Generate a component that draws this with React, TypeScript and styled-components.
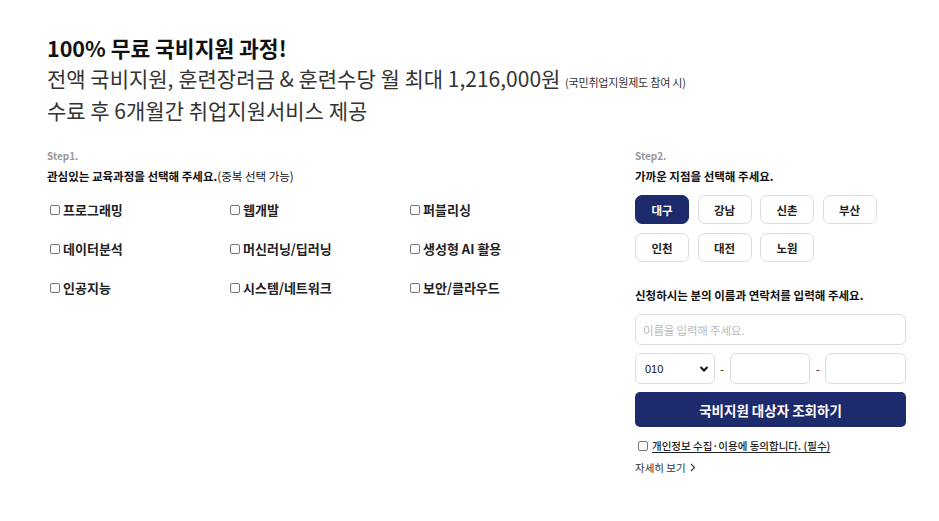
import styled, { createGlobalStyle } from "styled-components"

const GlobalStyle = createGlobalStyle`
  body {
    margin: 0;
    background: #fff;
    font-family: "Noto Sans CJK KR", "Noto Sans", sans-serif;
    color: #111;
  }
  * { box-sizing: border-box; }
`

const NAVY = "#1d2a6c"

const Page = styled.div`
  width: 939px;
  padding: 33px 33px 40px 47px;
`

const Title = styled.h1`
  margin: 0;
  font-size: 21.5px;
  font-weight: 700;
  line-height: 29px;
  letter-spacing: 0;
`

const Sub = styled.p`
  margin: 0;
  height: 32px;
  font-size: 21px;
  font-weight: 400;
  line-height: 32px;
  color: #333;
  letter-spacing: 0;
`

const Note = styled.span`
  font-size: 11px;
  line-height: 1;
  color: #333;
  letter-spacing: -0.2px;
`

const Body = styled.div`
  display: flex;
  justify-content: space-between;
  margin-top: 23px;
`

const LeftCol = styled.div`
  width: 560px;
`

const RightCol = styled.div`
  width: 271px;
`

const Step = styled.div`
  font-size: 10px;
  font-weight: 700;
  color: #999;
  line-height: 14px;
`

const Question = styled.div`
  margin-top: 5px;
  font-size: 11.5px;
  font-weight: 700;
  line-height: 16px;
  letter-spacing: 0;

  span {
    font-weight: 400;
  }
`

const CourseGrid = styled.div`
  display: grid;
  grid-template-columns: 180px 180px 180px;
  row-gap: 23px;
  margin-top: 18px;
  padding-left: 3px;
`

const CourseItem = styled.label`
  display: flex;
  align-items: center;
  gap: 3px;
  font-size: 13px;
  font-weight: 700;
  line-height: 16px;
  color: #222;
  letter-spacing: 0;
`

const Box = styled.span`
  display: inline-block;
  width: 10px;
  height: 10px;
  border: 1px solid #777;
  border-radius: 2px;
  background: #fff;
  flex-shrink: 0;
`

const BranchGrid = styled.div`
  display: grid;
  grid-template-columns: repeat(4, 54px);
  column-gap: 8.5px;
  row-gap: 9px;
  margin-top: 11px;
`

const Branch = styled.button<{ $active?: boolean }>`
  height: 29px;
  border-radius: 7px;
  border: 1px solid ${p => (p.$active ? NAVY : "#dcdcdc")};
  background: ${p => (p.$active ? NAVY : "#fff")};
  color: ${p => (p.$active ? "#fff" : "#222")};
  font-family: inherit;
  font-size: 11.5px;
  font-weight: 700;
  padding: 0;
`

const FormLabel = styled(Question)`
  margin-top: 25px;
`

const NameInput = styled.div`
  margin-top: 11px;
  height: 31px;
  border: 1px solid #dcdcdc;
  border-radius: 6px;
  display: flex;
  align-items: center;
  padding-left: 7px;
  font-size: 11.5px;
  color: #bbb;
  letter-spacing: -0.2px;
`

const PhoneRow = styled.div`
  display: flex;
  align-items: center;
  margin-top: 8px;
`

const Field = styled.div<{ $w: number }>`
  width: ${p => p.$w}px;
  height: 31px;
  border: 1px solid #dcdcdc;
  border-radius: 6px;
  display: flex;
  align-items: center;
  justify-content: space-between;
  padding: 0 5px 0 9px;
  font-size: 11px;
  color: #111;
  font-family: "Liberation Sans", Arial, sans-serif;
`

const Dash = styled.span`
  width: 15px;
  text-align: center;
  font-size: 12px;
  color: #333;
`

const Submit = styled.button`
  margin-top: 8px;
  width: 100%;
  height: 35px;
  border: none;
  border-radius: 5px;
  background: ${NAVY};
  color: #fff;
  font-family: inherit;
  font-size: 13.5px;
  font-weight: 700;
  letter-spacing: 0;
`

const Agree = styled.label`
  display: flex;
  align-items: center;
  gap: 4px;
  margin-top: 11px;
  padding-left: 3px;
  font-size: 10.5px;
  font-weight: 500;
  color: #222;

  u {
    text-underline-offset: 2px;
  }
`

const More = styled.div`
  margin-top: 7px;
  font-size: 10.5px;
  color: #333;
  display: flex;
  align-items: center;
  gap: 4px;
`

const courses = [
  "프로그래밍", "웹개발", "퍼블리싱",
  "데이터분석", "머신러닝/딥러닝", "생성형 AI 활용",
  "인공지능", "시스템/네트워크", "보안/클라우드",
]

const branches = ["대구", "강남", "신촌", "부산", "인천", "대전", "노원"]

export default function App() {
  return (
    <>
      <GlobalStyle />
      <Page>
        <Title>100% 무료 국비지원 과정!</Title>
        <Sub>
          전액 국비지원, 훈련장려금 &amp; 훈련수당 월 최대 1,216,000원 <Note>(국민취업지원제도 참여 시)</Note>
        </Sub>
        <Sub>수료 후 6개월간 취업지원서비스 제공</Sub>

        <Body>
          <LeftCol>
            <Step>Step1.</Step>
            <Question>
              관심있는 교육과정을 선택해 주세요.<span>(중복 선택 가능)</span>
            </Question>
            <CourseGrid>
              {courses.map(c => (
                <CourseItem key={c}>
                  <Box />
                  {c}
                </CourseItem>
              ))}
            </CourseGrid>
          </LeftCol>

          <RightCol>
            <Step>Step2.</Step>
            <Question>가까운 지점을 선택해 주세요.</Question>
            <BranchGrid>
              {branches.map((b, i) => (
                <Branch key={b} $active={i === 0}>{b}</Branch>
              ))}
            </BranchGrid>

            <FormLabel>신청하시는 분의 이름과 연락처를 입력해 주세요.</FormLabel>
            <NameInput>이름을 입력해 주세요.</NameInput>
            <PhoneRow>
              <Field $w={80}>
                010
                <svg width="10" height="8" viewBox="0 0 10 8">
                  <path d="M1.5 2 L5 5.5 L8.5 2" fill="none" stroke="#111" strokeWidth="2" />
                </svg>
              </Field>
              <Dash>-</Dash>
              <Field $w={81} />
              <Dash>-</Dash>
              <Field $w={81} />
            </PhoneRow>
            <Submit>국비지원 대상자 조회하기</Submit>
            <Agree>
              <Box />
              <u>개인정보 수집·이용에 동의합니다. (필수)</u>
            </Agree>
            <More>
              자세히 보기
              <svg width="6" height="9" viewBox="0 0 6 9">
                <path d="M1 1 L4.5 4.5 L1 8" fill="none" stroke="#333" strokeWidth="1.1" />
              </svg>
            </More>
          </RightCol>
        </Body>
      </Page>
    </>
  )
}
